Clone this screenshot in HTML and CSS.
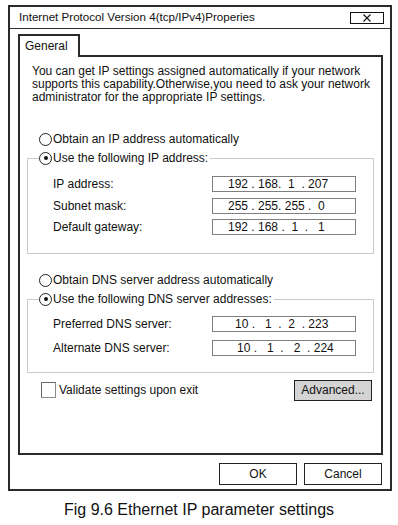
FILE: index.html
```html
<!DOCTYPE html>
<html>
<head>
<meta charset="utf-8">
<link rel="stylesheet" href="styles.css">
</head>
<body>
<div class="window">
  <div class="titlebar">
    <span class="title">Internet Protocol Version 4(tcp/IPv4)Properies</span>
    <span class="close"><svg width="10" height="8" viewBox="0 0 10 8"><path d="M1.5 0.5 L8.5 7.5 M8.5 0.5 L1.5 7.5" stroke="#111" stroke-width="1.1" fill="none"/></svg></span>
  </div>
  <div class="body">
    <div class="tabs">
      <div class="tab">General</div>
      <div class="tabfill"></div>
    </div>
    <div class="panel">
      <p class="desc">You can get IP settings assigned automatically if your network supports this capability.Otherwise,you need to ask your network administrator for the appropriate IP settings.</p>
      <div class="radio-row first"><span class="radio"></span>Obtain an IP address automatically</div>
      <fieldset class="group g1">
        <legend class="radio-row"><span class="radio on"></span>Use the following IP address:</legend>
        <div class="grid grid1">
          <span class="label">IP address:</span><span class="field">192 . 168.  1  . 207</span>
          <span class="label">Subnet mask:</span><span class="field">255 . 255. 255 .  0</span>
          <span class="label">Default gateway:</span><span class="field">192 . 168 .  1  .   1</span>
        </div>
      </fieldset>
      <div class="radio-row dns"><span class="radio"></span>Obtain DNS server address automatically</div>
      <fieldset class="group g2">
        <legend class="radio-row"><span class="radio on"></span>Use the following DNS server addresses:</legend>
        <div class="grid grid2">
          <span class="label">Preferred DNS server:</span><span class="field dnsf">10 .   1  .  2  . 223</span>
          <span class="label">Alternate DNS server:</span><span class="field dnsf2">10 .   1  .   2  . 224</span>
        </div>
      </fieldset>
      <div class="validate">
        <span class="check"></span><span class="vlabel">Validate settings upon exit</span>
        <span class="btn adv">Advanced...</span>
      </div>
    </div>
    <div class="buttons">
      <span class="btn">OK</span>
      <span class="btn">Cancel</span>
    </div>
  </div>
</div>
<div class="caption">Fig 9.6 Ethernet IP parameter settings</div>
</body>
</html>
```
FILE: styles.css
```css
* { box-sizing: border-box; }
html, body { margin: 0; padding: 0; background: #fff; }
body {
  font-family: "Liberation Sans", Arial, sans-serif;
  font-size: 12px;
  color: #111;
  width: 398px;
  height: 525px;
  overflow: hidden;
}
.window {
  margin: 5px 0 0 8px;
  width: 384px;
  height: 486px;
  border: 2px solid #2a2a2a;
  display: flex;
  flex-direction: column;
}
.titlebar {
  height: 22px;
  border-bottom: 1.5px solid #2a2a2a;
  display: flex;
  align-items: flex-start;
  justify-content: space-between;
  padding: 3px 6px 0 9px;
}
.title { line-height: 14px; font-size: 11.6px; }
.close {
  margin-top: 2px;
  width: 34px;
  height: 12px;
  border: 1.5px solid #111;
  display: flex;
  align-items: center;
  justify-content: center;
}
.close svg { display: block; }
.body {
  flex: 1;
  display: flex;
  flex-direction: column;
  padding: 5px 7px 0 8px;
}
.tabs { display: flex; height: 23px; }
.tab {
  width: 62px;
  border: 2px solid #2a2a2a;
  border-bottom: none;
  padding: 3px 0 0 5px;
  line-height: 15px;
}
.tabfill { flex: 1; border-bottom: 2px solid #2a2a2a; }
.panel {
  height: 398px;
  border: 2px solid #2a2a2a;
  border-top: none;
  padding: 8px 0 0 0;
}
.desc {
  margin: 0;
  padding: 0 8px 0 12px;
  line-height: 13px;
}
.radio-row {
  display: flex;
  align-items: center;
  height: 14px;
  line-height: 14px;
}
.radio-row.first { margin: 28px 0 0 19px; }
.radio-row.dns { margin: 19px 0 0 19px; }
.radio {
  width: 13px;
  height: 13px;
  border: 1px solid #222;
  border-radius: 50%;
  margin-right: 1px;
  display: flex;
  align-items: center;
  justify-content: center;
  flex: none;
}
.radio.on::after {
  content: "";
  width: 4px;
  height: 4px;
  border-radius: 50%;
  background: #111;
}
.group {
  margin: 5px 7px 0 7px;
  padding: 0;
  border: 1px solid #cacaca;
  min-width: 0;
}
.group legend {
  padding: 0 2px 0 0;
  margin-left: 11px;
  background: #fff;
}
.grid {
  display: grid;
  grid-template-columns: 159px 144px;
  padding-left: 25px;
  align-items: center;
}
.grid1 { padding-top: 11px; padding-bottom: 18px; row-gap: 5.5px; }
.grid2 { padding-top: 10px; padding-bottom: 16px; row-gap: 7.5px; }
.label { line-height: 14px; }
.field {
  height: 16px;
  border: 1px solid #808080;
  white-space: pre;
  padding-left: 15px;
  line-height: 14px;
}
.field.dnsf { padding-left: 22px; }
.field.dnsf2 { padding-left: 24px; }
.validate {
  display: flex;
  align-items: center;
  margin: 7px 9px 0 21px;
  height: 21px;
}
.check {
  width: 15px;
  height: 16px;
  border: 1px solid #8a8a8a;
  border-top-color: #666;
  border-left-color: #666;
  margin-right: 3px;
}
.vlabel { flex: 1; }
.btn {
  width: 78px;
  height: 22px;
  border: 1.5px solid #222;
  display: flex;
  align-items: center;
  justify-content: center;
}
.btn.adv {
  height: 21px;
  background: #d4d4d4;
}
.buttons {
  display: flex;
  justify-content: flex-end;
  gap: 7px;
  margin-top: 8px;
  padding-right: 1px;
}
.caption {
  margin-top: 10px;
  text-align: center;
  font-size: 16px;
  line-height: 18px;
}
```
